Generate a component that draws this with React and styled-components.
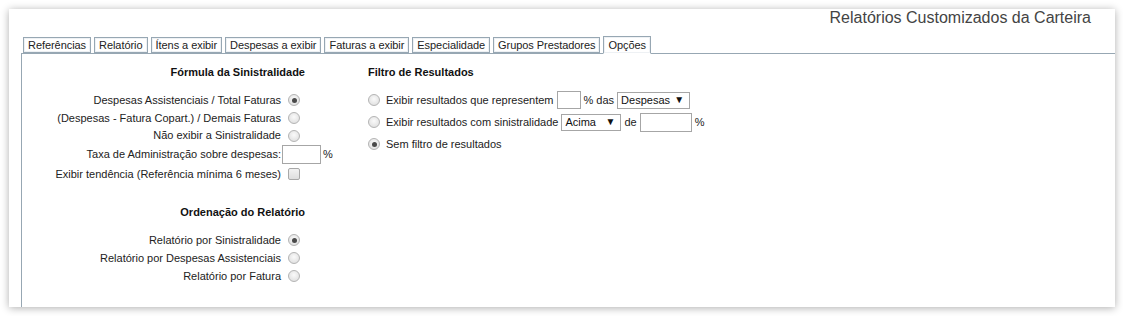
import styled, { createGlobalStyle } from "styled-components";

const GlobalStyle = createGlobalStyle`
  body {
    margin: 0;
    background: #ffffff;
    font-family: "Liberation Sans", Arial, sans-serif;
  }
`;

const Page = styled.div`
  padding: 9px 8px 9px 9px;
`;

const Card = styled.div`
  width: 1106px;
  height: 298px;
  background: #fff;
  box-shadow: 0 1px 8px rgba(0, 0, 0, 0.32);
  overflow: hidden;
  padding-left: 12px;
  box-sizing: border-box;
`;

const Title = styled.div`
  height: 26px;
  text-align: right;
  padding-right: 24px;
  font-size: 16px;
  line-height: 18px;
  color: #444;
`;

const TabStrip = styled.div`
  display: flex;
  align-items: flex-end;
  gap: 3px;
  padding-left: 2px;
  height: 18px;
`;

const Tab = styled.div`
  height: ${(p) => (p.$active ? "18px" : "16px")};
  box-sizing: border-box;
  padding: 0 4px;
  border: 1px solid #97a7b3;
  border-bottom: ${(p) => (p.$active ? "1px solid #fff" : "1px solid #97a7b3")};
  margin-bottom: ${(p) => (p.$active ? "-1px" : "0")};
  background: #fff;
  box-shadow: inset 0 0 0 1px #eef1f4;
  font-size: 11px;
  letter-spacing: -0.06px;
  line-height: ${(p) => (p.$active ? "16px" : "14px")};
  color: #222;
  white-space: nowrap;
  position: relative;
  z-index: 1;
`;

const Panel = styled.div`
  border-top: 1px solid #97a7b3;
  border-left: 1px solid #97a7b3;
  height: 280px;
  display: flex;
  padding-top: 9px;
  font-size: 11px;
  color: #222;
`;

const LeftCol = styled.div`
  width: 312px;
  display: grid;
  grid-template-columns: 259px 52px;
  column-gap: 1px;
  align-content: start;
`;

const Heading = styled.div`
  grid-column: 1 / -1;
  height: 18px;
  line-height: 18px;
  font-weight: bold;
  color: #111;
  text-align: ${(p) => (p.$left ? "left" : "right")};
  padding-right: ${(p) => (p.$left ? "0" : "29px")};
  margin-top: ${(p) => p.$top || "0"};
  margin-bottom: ${(p) => p.$bottom || "10px"};
`;

const Label = styled.div`
  text-align: right;
  height: ${(p) => p.$h || "18px"};
  line-height: ${(p) => p.$h || "18px"};
  white-space: nowrap;
`;

const Control = styled.div`
  display: flex;
  align-items: center;
  gap: 2px;
  height: ${(p) => p.$h || "18px"};
  padding-left: ${(p) => p.$pad || "0"};
`;

const Radio = styled.span`
  display: inline-block;
  width: 12px;
  height: 12px;
  box-sizing: border-box;
  border-radius: 50%;
  border: 1px solid #b4b4b4;
  background: radial-gradient(circle at 50% 40%, #fafafa 0%, #e4e4e4 70%, #d6d6d6 100%);
  position: relative;
  flex: none;
  margin-right: ${(p) => p.$gap || "0"};

  &::after {
    content: "";
    display: ${(p) => (p.$checked ? "block" : "none")};
    position: absolute;
    left: 2.5px;
    top: 2.5px;
    width: 5px;
    height: 5px;
    border-radius: 50%;
    background: #4a4a4a;
  }
`;

const Check = styled.span`
  display: inline-block;
  width: 12px;
  height: 12px;
  box-sizing: border-box;
  border: 1px solid #a8a8a8;
  border-radius: 2px;
  background: linear-gradient(#f2f2f2, #dedede);
  flex: none;
`;

const TextBox = styled.span`
  display: inline-block;
  width: ${(p) => p.$w}px;
  height: ${(p) => p.$h || 18}px;
  box-sizing: border-box;
  border: 1px solid #a6a6a6;
  background: #fff;
  flex: none;
`;

const Select = styled.span`
  display: inline-flex;
  justify-content: space-between;
  align-items: center;
  width: ${(p) => p.$w}px;
  height: 17px;
  box-sizing: border-box;
  border: 1px solid #a6a6a6;
  padding: 0 5px 0 3px;
  background: #fff;
  font-size: 11px;
  color: #111;
  flex: none;
`;

const Arrow = styled.span`
  font-size: 10px;
  line-height: 10px;
  color: #111;
`;

const RightCol = styled.div`
  margin-left: 34px;
  display: flex;
  flex-direction: column;
`;

const FilterRow = styled.div`
  display: flex;
  align-items: center;
  height: 22px;
  gap: 3px;
  white-space: nowrap;
`;

export default function App() {
  return (
    <>
      <GlobalStyle />
      <Page>
        <Card>
          <Title>Relatórios Customizados da Carteira</Title>
          <TabStrip>
            <Tab>Referências</Tab>
            <Tab>Relatório</Tab>
            <Tab>Ítens a exibir</Tab>
            <Tab>Despesas a exibir</Tab>
            <Tab>Faturas a exibir</Tab>
            <Tab>Especialidade</Tab>
            <Tab>Grupos Prestadores</Tab>
            <Tab $active>Opções</Tab>
          </TabStrip>
          <Panel>
            <LeftCol>
              <Heading>Fórmula da Sinistralidade</Heading>
              <Label>Despesas Assistenciais / Total Faturas</Label>
              <Control $pad="6px">
                <Radio $checked />
              </Control>
              <Label>(Despesas - Fatura Copart.) / Demais Faturas</Label>
              <Control $pad="6px">
                <Radio />
              </Control>
              <Label $h="17px">Não exibir a Sinistralidade</Label>
              <Control $h="17px" $pad="6px">
                <Radio />
              </Control>
              <Label $h="20px">Taxa de Administração sobre despesas:</Label>
              <Control $h="20px">
                <TextBox $w={39} $h={19} />
                <span>%</span>
              </Control>
              <Label $h="20px">Exibir tendência (Referência mínima 6 meses)</Label>
              <Control $h="20px" $pad="6px">
                <Check />
              </Control>
              <Heading $top="19px">Ordenação do Relatório</Heading>
              <Label>Relatório por Sinistralidade</Label>
              <Control $pad="6px">
                <Radio $checked />
              </Control>
              <Label>Relatório por Despesas Assistenciais</Label>
              <Control $pad="6px">
                <Radio />
              </Control>
              <Label>Relatório por Fatura</Label>
              <Control $pad="6px">
                <Radio />
              </Control>
            </LeftCol>
            <RightCol>
              <Heading $left $bottom="8px">
                Filtro de Resultados
              </Heading>
              <FilterRow>
                <Radio $gap="3px" />
                <span>Exibir resultados que representem</span>
                <TextBox $w={24} />
                <span>% das</span>
                <Select $w={73}>
                  Despesas <Arrow>▼</Arrow>
                </Select>
              </FilterRow>
              <FilterRow>
                <Radio $gap="3px" />
                <span>Exibir resultados com sinistralidade</span>
                <Select $w={60}>
                  Acima <Arrow>▼</Arrow>
                </Select>
                <span>de</span>
                <TextBox $w={52} $h={19} />
                <span>%</span>
              </FilterRow>
              <FilterRow>
                <Radio $checked $gap="3px" />
                <span>Sem filtro de resultados</span>
              </FilterRow>
            </RightCol>
          </Panel>
        </Card>
      </Page>
    </>
  );
}
